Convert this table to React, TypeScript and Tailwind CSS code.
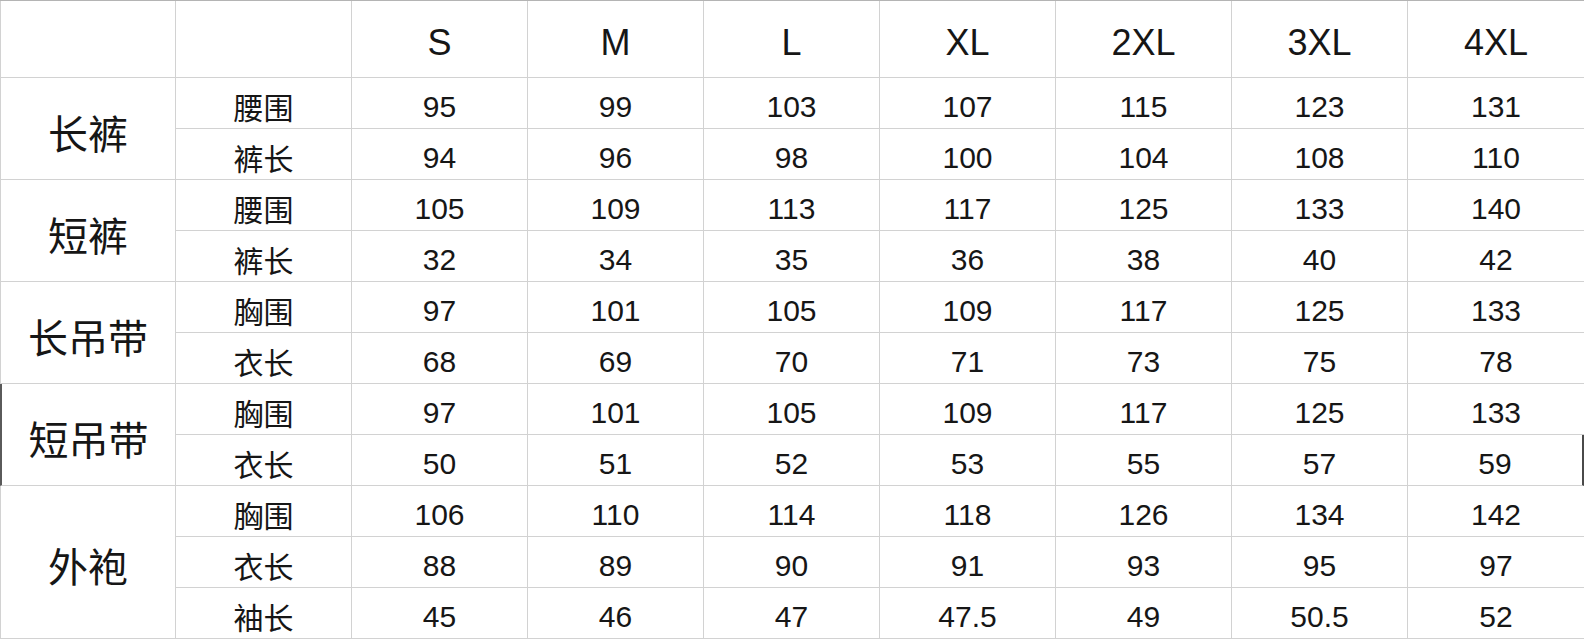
const sizes = ["S", "M", "L", "XL", "2XL", "3XL", "4XL"];

type Group = {
  name: string;
  rows: { label: string; values: string[] }[];
};

const groups: Group[] = [
  {
    name: "长裤",
    rows: [
      { label: "腰围", values: ["95", "99", "103", "107", "115", "123", "131"] },
      { label: "裤长", values: ["94", "96", "98", "100", "104", "108", "110"] },
    ],
  },
  {
    name: "短裤",
    rows: [
      { label: "腰围", values: ["105", "109", "113", "117", "125", "133", "140"] },
      { label: "裤长", values: ["32", "34", "35", "36", "38", "40", "42"] },
    ],
  },
  {
    name: "长吊带",
    rows: [
      { label: "胸围", values: ["97", "101", "105", "109", "117", "125", "133"] },
      { label: "衣长", values: ["68", "69", "70", "71", "73", "75", "78"] },
    ],
  },
  {
    name: "短吊带",
    rows: [
      { label: "胸围", values: ["97", "101", "105", "109", "117", "125", "133"] },
      { label: "衣长", values: ["50", "51", "52", "53", "55", "57", "59"] },
    ],
  },
  {
    name: "外袍",
    rows: [
      { label: "胸围", values: ["106", "110", "114", "118", "126", "134", "142"] },
      { label: "衣长", values: ["88", "89", "90", "91", "93", "95", "97"] },
      { label: "袖长", values: ["45", "46", "47", "47.5", "49", "50.5", "52"] },
    ],
  },
];

const latin = "font-['Liberation_Sans','Noto_Sans_CJK_SC',sans-serif]";
const cjk = "font-['Noto_Sans_CJK_SC',sans-serif]";

const App = () => {
  return (
    <div className="h-[640px] w-[1584px] overflow-hidden bg-white text-[#161616]">
      <div className="grid grid-cols-[repeat(9,176px)] grid-rows-[77px_repeat(11,51px)] border-t border-[#b4b4b4]">
        {/* header */}
        <div className="border-b border-l border-r border-[#d2d2d2]" />
        <div className="border-b border-r border-[#d2d2d2]" />
        {sizes.map((s, i) => (
          <div
            key={s}
            className={`flex items-center justify-center border-b border-[#d2d2d2] pt-[8px] text-[36px] ${latin} ${
              i < sizes.length - 1 ? "border-r" : ""
            }`}
          >
            {s}
          </div>
        ))}

        {groups.map((g, gi) =>
          g.rows.map((r, ri) => (
            <div key={`${g.name}-${ri}`} className="contents">
              {ri === 0 && (
                <div
                  className={`flex items-center justify-center border-b border-r border-[#d2d2d2] pt-[6px] text-[40px] ${cjk} ${
                    g.rows.length === 3 ? "row-span-3" : "row-span-2"
                  } ${gi === 3 ? "border-l-2 border-l-[#5a5a5a]" : "border-l"}`}
                >
                  {g.name}
                </div>
              )}
              <div
                className={`flex items-center justify-center border-b border-r border-[#d2d2d2] pt-[6px] text-[30px] ${cjk}`}
              >
                {r.label}
              </div>
              {r.values.map((v, vi) => {
                const last = vi === r.values.length - 1;
                const selected = last && gi === 3 && ri === 1;
                return (
                  <div
                    key={vi}
                    className={`flex items-center justify-center border-b border-[#d2d2d2] pt-[6px] text-[30px] ${latin} ${
                      last ? "" : "border-r"
                    } ${selected ? "border-r-2 border-r-[#4a4a4a]" : ""}`}
                  >
                    {v}
                  </div>
                );
              })}
            </div>
          ))
        )}
      </div>
    </div>
  );
};

export default App;
